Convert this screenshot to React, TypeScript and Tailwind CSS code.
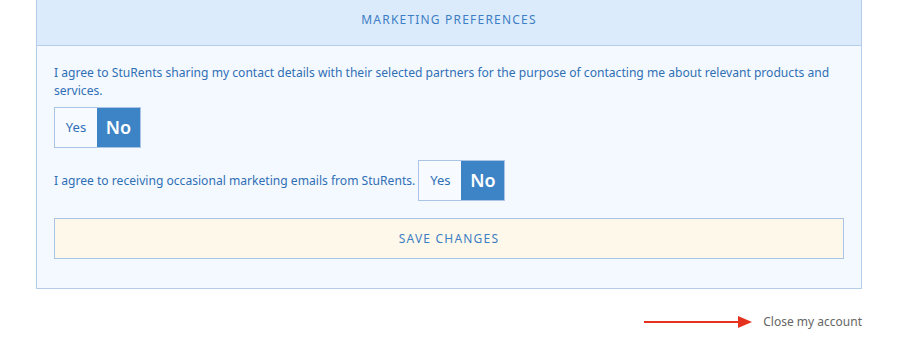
import React from 'react'

const Toggle = () => (
  <div className="flex h-[41px] w-fit border border-[#a9c4e4]">
    <button className="w-[42px] bg-[#f7fbff] text-[13px] text-[#2f6fb5]">Yes</button>
    <button className="w-[43px] bg-[#3d84c6] text-[18px] font-semibold text-white">No</button>
  </div>
)

export default function App() {
  return (
    <div className="min-h-[360px] bg-white" style={{ fontFamily: '"Noto Sans", "Open Sans", sans-serif' }}>
      <div className="ml-[36px] w-[826px] border border-t-0 border-[#b4cdeb] bg-[#f4f9ff]">
        <div className="flex h-[46px] items-center justify-center border-b border-[#b4cdeb] bg-[#dcebfb] pb-[6px] text-[12px] tracking-[1.2px] text-[#3d7ec4]">
          MARKETING PREFERENCES
        </div>
        <div className="px-[17px] pt-[18px] pb-[29px]">
          <p className="text-[12.1px] leading-[18px] text-[#2f6fb5]">
            I agree to StuRents sharing my contact details with their selected partners for the purpose of contacting me about relevant products and services.
          </p>
          <div className="mt-[7px]">
            <Toggle />
          </div>
          <div className="mt-[12px] flex items-center gap-[3px]">
            <span className="text-[12.1px] leading-[18px] text-[#2f6fb5]">
              I agree to receiving occasional marketing emails from StuRents.
            </span>
            <Toggle />
          </div>
          <button className="mt-[17px] h-[41px] w-full border border-[#a9c4e4] bg-[#fef8ea] text-[12px] tracking-[1.2px] text-[#3d7ec4]">
            SAVE CHANGES
          </button>
        </div>
      </div>
      <div className="ml-[36px] mt-[24px] flex w-[826px] items-center justify-end gap-[11px]">
        <svg width="108" height="14" viewBox="0 0 108 14">
          <line x1="0" y1="7" x2="96" y2="7" stroke="#e5321e" strokeWidth="2" />
          <polygon points="94,1 108,7 94,13" fill="#e5321e" />
        </svg>
        <span className="text-[12px] text-[#666]">Close my account</span>
      </div>
    </div>
  )
}
